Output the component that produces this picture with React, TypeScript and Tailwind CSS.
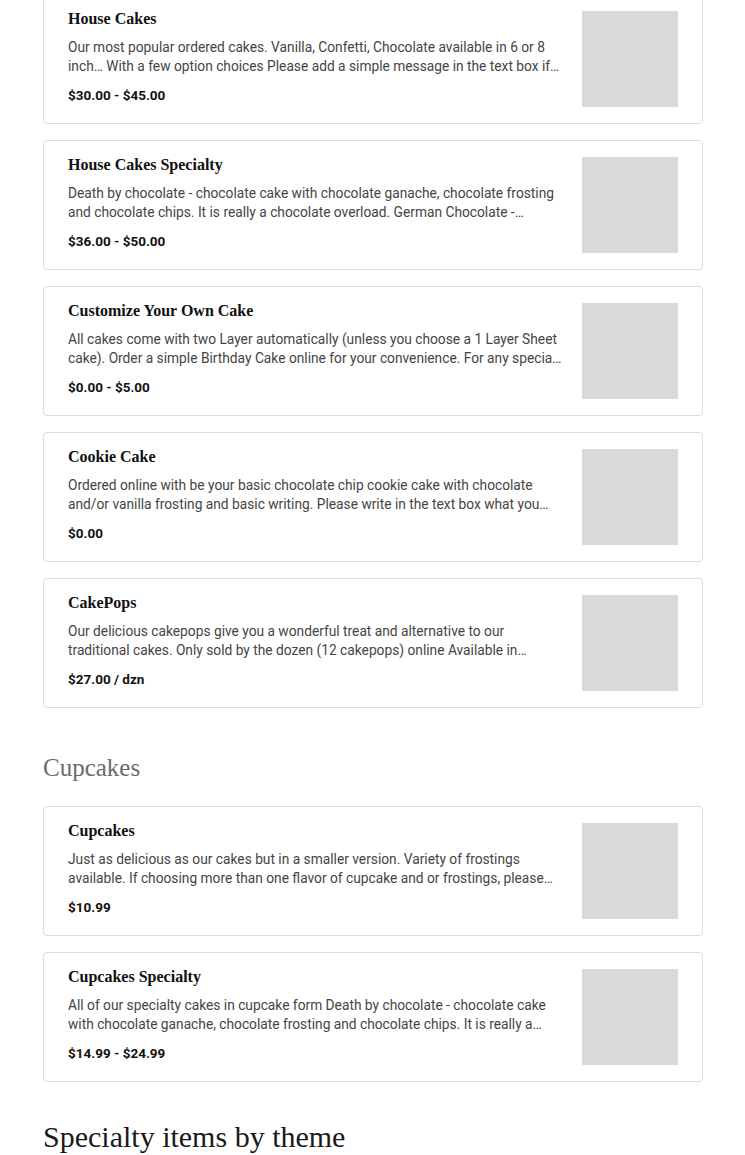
import React from "react";

type Item = { title: string; lines: [string, string]; price: string };

const cakes: Item[] = [
  {
    title: "House Cakes",
    lines: [
      "Our most popular ordered cakes. Vanilla, Confetti, Chocolate available in 6 or 8",
      "inch… With a few option choices Please add a simple message in the text box if…",
    ],
    price: "$30.00 - $45.00",
  },
  {
    title: "House Cakes Specialty",
    lines: [
      "Death by chocolate - chocolate cake with chocolate ganache, chocolate frosting",
      "and chocolate chips. It is really a chocolate overload. German Chocolate -…",
    ],
    price: "$36.00 - $50.00",
  },
  {
    title: "Customize Your Own Cake",
    lines: [
      "All cakes come with two Layer automatically (unless you choose a 1 Layer Sheet",
      "cake). Order a simple Birthday Cake online for your convenience. For any specia…",
    ],
    price: "$0.00 - $5.00",
  },
  {
    title: "Cookie Cake",
    lines: [
      "Ordered online with be your basic chocolate chip cookie cake with chocolate",
      "and/or vanilla frosting and basic writing. Please write in the text box what you…",
    ],
    price: "$0.00",
  },
  {
    title: "CakePops",
    lines: [
      "Our delicious cakepops give you a wonderful treat and alternative to our",
      "traditional cakes. Only sold by the dozen (12 cakepops) online Available in…",
    ],
    price: "$27.00 / dzn",
  },
];

const cupcakes: Item[] = [
  {
    title: "Cupcakes",
    lines: [
      "Just as delicious as our cakes but in a smaller version. Variety of frostings",
      "available. If choosing more than one flavor of cupcake and or frostings, please…",
    ],
    price: "$10.99",
  },
  {
    title: "Cupcakes Specialty",
    lines: [
      "All of our specialty cakes in cupcake form Death by chocolate - chocolate cake",
      "with chocolate ganache, chocolate frosting and chocolate chips. It is really a…",
    ],
    price: "$14.99 - $24.99",
  },
];

const serif = "font-['Liberation_Serif','Times_New_Roman',serif]";
const sans = "font-['Roboto','Liberation_Sans',sans-serif]";

function Card({ item }: { item: Item }) {
  return (
    <div className="flex h-[130px] items-start gap-4 rounded-[4px] border border-[#dcdcdc] bg-white px-6 py-4">
      <div className="min-w-0 flex-1">
        <div className={`${serif} text-[16px] font-bold leading-[16px] text-[#111]`}>{item.title}</div>
        <div className={`${sans} mt-[11px] text-[13.75px] leading-[19px] text-[#454545]`}>
          <div className="truncate">{item.lines[0]}</div>
          <div className="truncate">{item.lines[1]}</div>
        </div>
        <div className={`${sans} mt-[10px] text-[13.5px] font-bold leading-[18px] text-[#111]`}>{item.price}</div>
      </div>
      <div className="h-[96px] w-[96px] shrink-0 bg-[#d9d9d9]" />
    </div>
  );
}

export default function App() {
  return (
    <div className="min-h-[1155px] w-[745px] overflow-hidden bg-white">
      <div className="ml-[43px] mt-[-6px] w-[660px]">
        <div className="flex flex-col gap-4">
          {cakes.map((c) => (
            <Card key={c.title} item={c} />
          ))}
        </div>
        <h2 className={`${serif} mt-[44px] mb-[22px] text-[25px] font-normal leading-[32px] text-[#6b6b6b]`}>Cupcakes</h2>
        <div className="flex flex-col gap-4">
          {cupcakes.map((c) => (
            <Card key={c.title} item={c} />
          ))}
        </div>
        <h2 className={`${serif} mt-[37px] text-[30px] font-normal leading-[36px] text-[#1a1a1a]`}>Specialty items by theme</h2>
      </div>
    </div>
  );
}
